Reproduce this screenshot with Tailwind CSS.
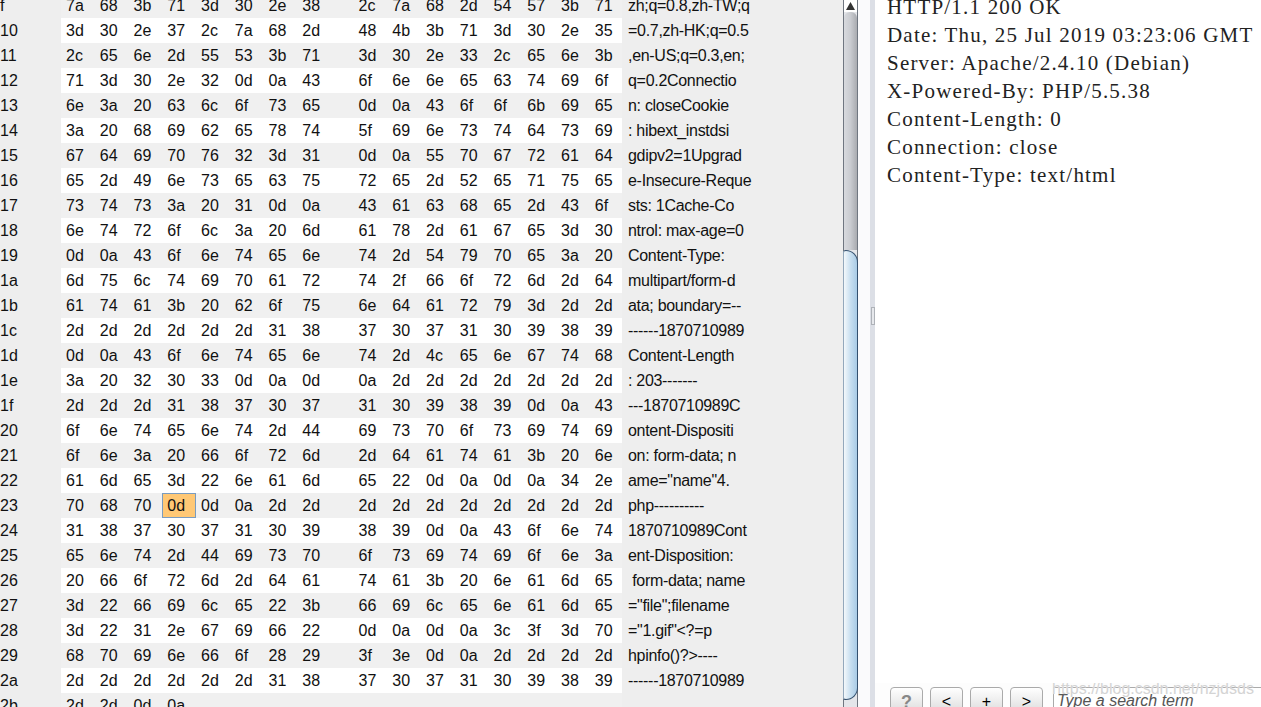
<!DOCTYPE html>
<html lang="en">
<head>
<meta charset="utf-8">
<title>Hex view</title>
<script src="https://cdn.jsdelivr.net/npm/@tailwindcss/browser@4"></script>
</head>
<body class="overflow-hidden bg-white">
<div class="flex h-[707px] w-[1261px] overflow-hidden font-['Liberation_Sans',sans-serif] text-base text-[#111]">
  <main class="w-[843px] shrink-0 overflow-hidden bg-[#eeeeee]">
    <div class="-mt-[7px] leading-[25px] [&>div]:flex [&>div]:h-[25px] [&>div>b]:w-[61px] [&>div>b]:shrink-0 [&>div>b]:font-normal [&>div>i]:w-[561px] [&>div>i]:h-[25px] [&>div>i]:shrink-0 [&>div>i]:flex [&>div>i]:not-italic [&>div>i]:bg-white [&>div:nth-child(odd)>i]:bg-[#f0f0f0] [&>div>i>span]:w-[33.75px] [&>div>i>span]:shrink-0 [&>div>i>span]:pl-[5px] [&>div>i>span:nth-child(8)]:mr-[22.5px] [&>div>u]:pl-[6px] [&>div>u]:no-underline [&>div>u]:whitespace-pre [&>div>u]:tracking-[-0.3px]">
      <div><b>f</b><i><span>7a</span><span>68</span><span>3b</span><span>71</span><span>3d</span><span>30</span><span>2e</span><span>38</span><span>2c</span><span>7a</span><span>68</span><span>2d</span><span>54</span><span>57</span><span>3b</span><span>71</span></i><u>zh;q=0.8,zh-TW;q</u></div>
      <div><b>10</b><i><span>3d</span><span>30</span><span>2e</span><span>37</span><span>2c</span><span>7a</span><span>68</span><span>2d</span><span>48</span><span>4b</span><span>3b</span><span>71</span><span>3d</span><span>30</span><span>2e</span><span>35</span></i><u>=0.7,zh-HK;q=0.5</u></div>
      <div><b>11</b><i><span>2c</span><span>65</span><span>6e</span><span>2d</span><span>55</span><span>53</span><span>3b</span><span>71</span><span>3d</span><span>30</span><span>2e</span><span>33</span><span>2c</span><span>65</span><span>6e</span><span>3b</span></i><u>,en-US;q=0.3,en;</u></div>
      <div><b>12</b><i><span>71</span><span>3d</span><span>30</span><span>2e</span><span>32</span><span>0d</span><span>0a</span><span>43</span><span>6f</span><span>6e</span><span>6e</span><span>65</span><span>63</span><span>74</span><span>69</span><span>6f</span></i><u>q=0.2Connectio</u></div>
      <div><b>13</b><i><span>6e</span><span>3a</span><span>20</span><span>63</span><span>6c</span><span>6f</span><span>73</span><span>65</span><span>0d</span><span>0a</span><span>43</span><span>6f</span><span>6f</span><span>6b</span><span>69</span><span>65</span></i><u>n: closeCookie</u></div>
      <div><b>14</b><i><span>3a</span><span>20</span><span>68</span><span>69</span><span>62</span><span>65</span><span>78</span><span>74</span><span>5f</span><span>69</span><span>6e</span><span>73</span><span>74</span><span>64</span><span>73</span><span>69</span></i><u>: hibext_instdsi</u></div>
      <div><b>15</b><i><span>67</span><span>64</span><span>69</span><span>70</span><span>76</span><span>32</span><span>3d</span><span>31</span><span>0d</span><span>0a</span><span>55</span><span>70</span><span>67</span><span>72</span><span>61</span><span>64</span></i><u>gdipv2=1Upgrad</u></div>
      <div><b>16</b><i><span>65</span><span>2d</span><span>49</span><span>6e</span><span>73</span><span>65</span><span>63</span><span>75</span><span>72</span><span>65</span><span>2d</span><span>52</span><span>65</span><span>71</span><span>75</span><span>65</span></i><u>e-Insecure-Reque</u></div>
      <div><b>17</b><i><span>73</span><span>74</span><span>73</span><span>3a</span><span>20</span><span>31</span><span>0d</span><span>0a</span><span>43</span><span>61</span><span>63</span><span>68</span><span>65</span><span>2d</span><span>43</span><span>6f</span></i><u>sts: 1Cache-Co</u></div>
      <div><b>18</b><i><span>6e</span><span>74</span><span>72</span><span>6f</span><span>6c</span><span>3a</span><span>20</span><span>6d</span><span>61</span><span>78</span><span>2d</span><span>61</span><span>67</span><span>65</span><span>3d</span><span>30</span></i><u>ntrol: max-age=0</u></div>
      <div><b>19</b><i><span>0d</span><span>0a</span><span>43</span><span>6f</span><span>6e</span><span>74</span><span>65</span><span>6e</span><span>74</span><span>2d</span><span>54</span><span>79</span><span>70</span><span>65</span><span>3a</span><span>20</span></i><u>Content-Type: </u></div>
      <div><b>1a</b><i><span>6d</span><span>75</span><span>6c</span><span>74</span><span>69</span><span>70</span><span>61</span><span>72</span><span>74</span><span>2f</span><span>66</span><span>6f</span><span>72</span><span>6d</span><span>2d</span><span>64</span></i><u>multipart/form-d</u></div>
      <div><b>1b</b><i><span>61</span><span>74</span><span>61</span><span>3b</span><span>20</span><span>62</span><span>6f</span><span>75</span><span>6e</span><span>64</span><span>61</span><span>72</span><span>79</span><span>3d</span><span>2d</span><span>2d</span></i><u>ata; boundary=--</u></div>
      <div><b>1c</b><i><span>2d</span><span>2d</span><span>2d</span><span>2d</span><span>2d</span><span>2d</span><span>31</span><span>38</span><span>37</span><span>30</span><span>37</span><span>31</span><span>30</span><span>39</span><span>38</span><span>39</span></i><u>------1870710989</u></div>
      <div><b>1d</b><i><span>0d</span><span>0a</span><span>43</span><span>6f</span><span>6e</span><span>74</span><span>65</span><span>6e</span><span>74</span><span>2d</span><span>4c</span><span>65</span><span>6e</span><span>67</span><span>74</span><span>68</span></i><u>Content-Length</u></div>
      <div><b>1e</b><i><span>3a</span><span>20</span><span>32</span><span>30</span><span>33</span><span>0d</span><span>0a</span><span>0d</span><span>0a</span><span>2d</span><span>2d</span><span>2d</span><span>2d</span><span>2d</span><span>2d</span><span>2d</span></i><u>: 203-------</u></div>
      <div><b>1f</b><i><span>2d</span><span>2d</span><span>2d</span><span>31</span><span>38</span><span>37</span><span>30</span><span>37</span><span>31</span><span>30</span><span>39</span><span>38</span><span>39</span><span>0d</span><span>0a</span><span>43</span></i><u>---1870710989C</u></div>
      <div><b>20</b><i><span>6f</span><span>6e</span><span>74</span><span>65</span><span>6e</span><span>74</span><span>2d</span><span>44</span><span>69</span><span>73</span><span>70</span><span>6f</span><span>73</span><span>69</span><span>74</span><span>69</span></i><u>ontent-Dispositi</u></div>
      <div><b>21</b><i><span>6f</span><span>6e</span><span>3a</span><span>20</span><span>66</span><span>6f</span><span>72</span><span>6d</span><span>2d</span><span>64</span><span>61</span><span>74</span><span>61</span><span>3b</span><span>20</span><span>6e</span></i><u>on: form-data; n</u></div>
      <div><b>22</b><i><span>61</span><span>6d</span><span>65</span><span>3d</span><span>22</span><span>6e</span><span>61</span><span>6d</span><span>65</span><span>22</span><span>0d</span><span>0a</span><span>0d</span><span>0a</span><span>34</span><span>2e</span></i><u>ame="name"4.</u></div>
      <div><b>23</b><i><span>70</span><span>68</span><span>70</span><span class="h-[25px] bg-[#ffc875] outline outline-1 -outline-offset-1 outline-[#7a9cc0]">0d</span><span>0d</span><span>0a</span><span>2d</span><span>2d</span><span>2d</span><span>2d</span><span>2d</span><span>2d</span><span>2d</span><span>2d</span><span>2d</span><span>2d</span></i><u>php----------</u></div>
      <div><b>24</b><i><span>31</span><span>38</span><span>37</span><span>30</span><span>37</span><span>31</span><span>30</span><span>39</span><span>38</span><span>39</span><span>0d</span><span>0a</span><span>43</span><span>6f</span><span>6e</span><span>74</span></i><u>1870710989Cont</u></div>
      <div><b>25</b><i><span>65</span><span>6e</span><span>74</span><span>2d</span><span>44</span><span>69</span><span>73</span><span>70</span><span>6f</span><span>73</span><span>69</span><span>74</span><span>69</span><span>6f</span><span>6e</span><span>3a</span></i><u>ent-Disposition:</u></div>
      <div><b>26</b><i><span>20</span><span>66</span><span>6f</span><span>72</span><span>6d</span><span>2d</span><span>64</span><span>61</span><span>74</span><span>61</span><span>3b</span><span>20</span><span>6e</span><span>61</span><span>6d</span><span>65</span></i><u> form-data; name</u></div>
      <div><b>27</b><i><span>3d</span><span>22</span><span>66</span><span>69</span><span>6c</span><span>65</span><span>22</span><span>3b</span><span>66</span><span>69</span><span>6c</span><span>65</span><span>6e</span><span>61</span><span>6d</span><span>65</span></i><u>="file";filename</u></div>
      <div><b>28</b><i><span>3d</span><span>22</span><span>31</span><span>2e</span><span>67</span><span>69</span><span>66</span><span>22</span><span>0d</span><span>0a</span><span>0d</span><span>0a</span><span>3c</span><span>3f</span><span>3d</span><span>70</span></i><u>="1.gif"&lt;?=p</u></div>
      <div><b>29</b><i><span>68</span><span>70</span><span>69</span><span>6e</span><span>66</span><span>6f</span><span>28</span><span>29</span><span>3f</span><span>3e</span><span>0d</span><span>0a</span><span>2d</span><span>2d</span><span>2d</span><span>2d</span></i><u>hpinfo()?&gt;----</u></div>
      <div><b>2a</b><i><span>2d</span><span>2d</span><span>2d</span><span>2d</span><span>2d</span><span>2d</span><span>31</span><span>38</span><span>37</span><span>30</span><span>37</span><span>31</span><span>30</span><span>39</span><span>38</span><span>39</span></i><u>------1870710989</u></div>
      <div><b>2b</b><i><span>2d</span><span>2d</span><span>0d</span><span>0a</span></i></div>
    </div>
  </main>

  <div class="flex h-full w-[15px] shrink-0 flex-col border-x border-x-[#6f7680] bg-[#e4e6ea]">
    <div class="flex h-[12px] shrink-0 items-start justify-center bg-white pt-[2px]">
      <svg width="9" height="8" viewBox="0 0 9 8"><path d="M4.5 0 L9 8 H0 Z" fill="#333"/></svg>
    </div>
    <div class="h-[238px] shrink-0 rounded-t-[6px] bg-gradient-to-r from-[#d8dade] via-[#c9cbd0] to-[#a9abb0]"></div>
    <div class="-mx-px h-[450px] shrink-0 rounded-tl-[3px] rounded-tr-[13px] rounded-br-[13px] rounded-bl-[3px] border border-[#34506e] border-l-[#93a8bc] bg-gradient-to-r from-[#f4f8fb] via-[#c8dff0] to-[#a9cbe6]"></div>
  </div>

  <div class="flex h-full w-[12px] shrink-0 bg-[#fafafc]"></div>
  <div class="flex h-full w-[5px] shrink-0 flex-col items-center bg-[#dcdfe6] pt-[307px]">
    <div class="h-[18px] w-[4px] border border-[#aeb2b8] bg-[#e6e8ec]"></div>
  </div>

  <section class="flex h-full min-w-0 flex-1 flex-col bg-white">
    <div class="h-[683px] shrink-0 overflow-hidden pl-[12px]">
      <div class="-mt-[7px] whitespace-pre font-['Liberation_Serif',serif] text-[21px] leading-[28px] tracking-[1.2px] text-[#222]">HTTP/1.1 200 OK
Date: Thu, 25 Jul 2019 03:23:06 GMT
Server: Apache/2.4.10 (Debian)
X-Powered-By: PHP/5.5.38
Content-Length: 0
Connection: close
Content-Type: text/html</div>
    </div>
    <div class="relative flex h-[24px] shrink-0 items-start gap-[7px] overflow-hidden bg-[#fdfdfd] pt-[4px] pl-[15px]">
      <button class="h-[30px] w-[33px] shrink-0 rounded-[4px] border border-[#aaaaaa] bg-gradient-to-b from-white to-[#d8d8d8] text-[18px] leading-[26px] font-bold text-[#888]">?</button>
      <button class="h-[30px] w-[33px] shrink-0 rounded-[4px] border border-[#aaaaaa] bg-gradient-to-b from-white to-[#d8d8d8] text-[16px] leading-[28px] text-black">&lt;</button>
      <button class="h-[30px] w-[33px] shrink-0 rounded-[4px] border border-[#aaaaaa] bg-gradient-to-b from-white to-[#d8d8d8] text-[16px] leading-[28px] text-black">+</button>
      <button class="h-[30px] w-[33px] shrink-0 rounded-[4px] border border-[#aaaaaa] bg-gradient-to-b from-white to-[#d8d8d8] text-[16px] leading-[28px] text-black">&gt;</button>
      <div class="ml-[3px] h-[30px] min-w-0 flex-1 border-t border-l border-[#aaaaaa] bg-white pl-[3px] text-[16px] leading-[26px] whitespace-nowrap text-[#555] italic">Type a search term</div>
      <span class="absolute top-[-3px] left-[177px] text-[16px] leading-[18px] whitespace-nowrap text-[#d4d4d4] [text-shadow:0_0_1px_#ffffff]">https://blog.csdn.net/nzjdsds</span>
    </div>
  </section>
</div>
</body>
</html>
